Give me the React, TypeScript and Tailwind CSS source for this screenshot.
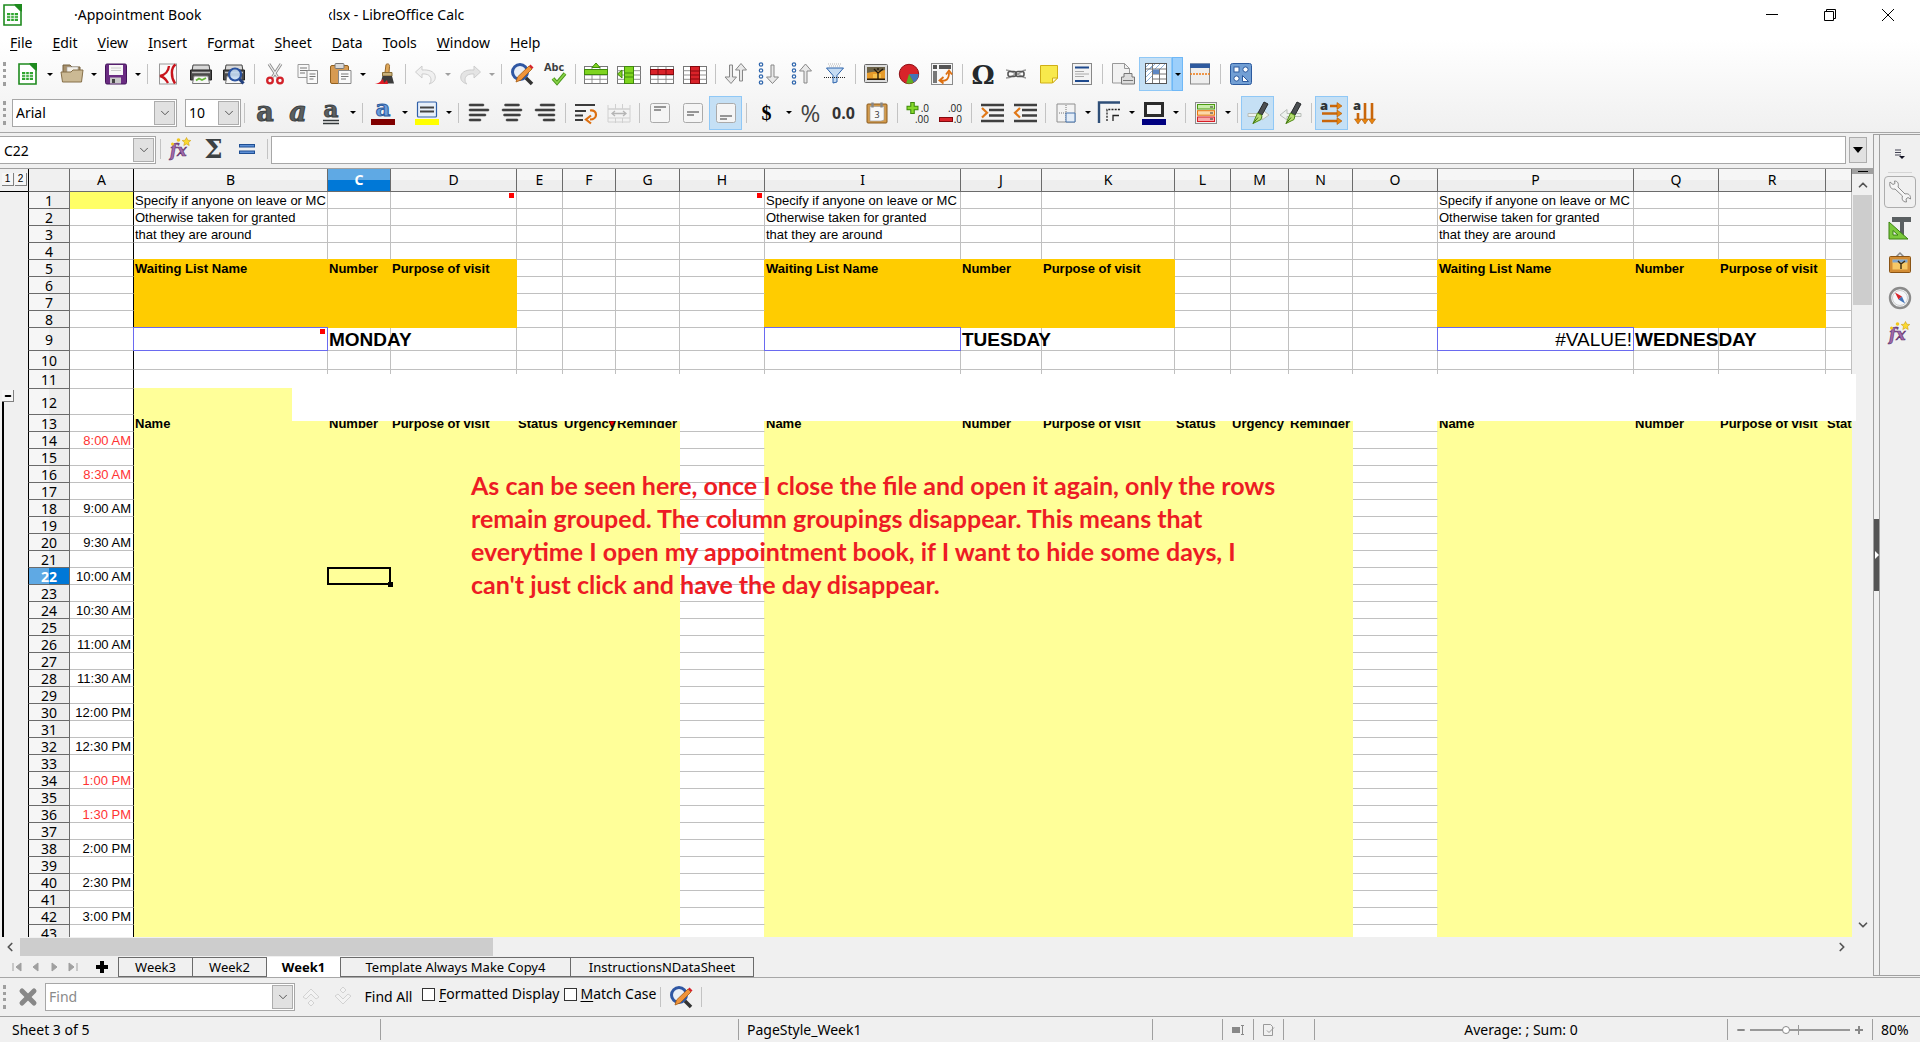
import React from "react";
import clsx from "clsx";
import { ChevronDown, ChevronLeft, ChevronRight, ChevronUp, Minus, X } from "lucide-react";

/* ---------- Icons ---------- */

const Icon: React.FC<{ children: React.ReactNode }> = ({ children }) => (
  <svg viewBox="0 0 24 24" className="w-6 h-6 shrink-0 overflow-visible" fill="none" aria-hidden="true">
    {children}
  </svg>
);

const CalcDoc = () => (
  <Icon>
    <path d="M3 2h11l6 6v14H3z" fill="#fff" stroke="#1e8a1e" strokeWidth="1.6" />
    <path d="M13 1h8v8z" fill="#1e8a1e" />
    <rect x="6" y="10" width="11" height="8" fill="#2fa52f" />
    <path d="M6 12.700h11M6 15.300h11M9.700 10v8M13.300 10v8" stroke="#fff" strokeWidth="0.9" />
  </Icon>
);

const Folder = () => (
  <Icon>
    <path d="M3 3h7l2 2h8v10H3z" fill="#a8916d" stroke="#75603e" />
    <path d="M7 5h11v8H7z" fill="#f4f1ea" stroke="#aaa" strokeWidth="0.6" />
    <path d="M1 10h10l2-2h10l-1.500 12H2.500z" fill="#cbb994" stroke="#86704a" />
  </Icon>
);

const Floppy = () => (
  <Icon>
    <rect x="1.500" y="2" width="21" height="20" rx="1.500" fill="#6a2c82" stroke="#43145a" />
    <rect x="5" y="3" width="14" height="10" fill="#f7f7f7" />
    <path d="M7 6h10M7 8.500h10" stroke="#ccc" />
    <rect x="6" y="15.500" width="11" height="6" fill="#c9c9c9" />
    <rect x="8" y="17" width="3" height="4" fill="#444" />
  </Icon>
);

const Pdf = () => (
  <Icon>
    <rect x="3.500" y="2" width="17" height="20" fill="#fafafa" stroke="#999" />
    <path d="M19.500 2.500c-4.500 3-5 12-.5 19M13 4c-.5 5-4 9-9 10 3 .5 6 3.500 8 7" stroke="#c8141c" strokeWidth="2.400" />
  </Icon>
);

const PrinterBody = () => (
  <>
    <path d="M4 3h16l1 6H3z" fill="#d8d8d8" stroke="#444" />
    <path d="M1.500 8h21v10h-21z" fill="#4a4a4a" stroke="#222" />
    <path d="M3 10.500h18" stroke="#bbb" strokeWidth="1.500" />
    <path d="M5 14h14l1.500 7.500h-17z" fill="#f7f7f7" stroke="#777" />
  </>
);

const PrinterIcon = () => (
  <Icon>
    <PrinterBody />
    <path d="M7 18.500l3-2 3 1.500 4-2" stroke="#67b93a" strokeWidth="1.800" />
  </Icon>
);

const Preview = () => (
  <Icon>
    <PrinterBody />
    <circle cx="13" cy="12.500" r="6" fill="#c4daf2" fillOpacity="0.900" stroke="#2b53a0" strokeWidth="2.200" />
    <path d="M17.500 17l4 4.500" stroke="#223f7d" strokeWidth="3" />
  </Icon>
);

const Scissors = () => (
  <Icon>
    <path d="M6 2l8.500 13M18 2L9.500 15" stroke="#8b8b8b" strokeWidth="3" />
    <path d="M6 2l8.500 13M18 2L9.500 15" stroke="#f0f0f0" strokeWidth="1.300" />
    <circle cx="7" cy="18.500" r="2.800" stroke="#d3222a" strokeWidth="2.300" />
    <circle cx="17" cy="18.500" r="2.800" stroke="#d3222a" strokeWidth="2.300" />
  </Icon>
);

const Copy = () => (
  <Icon>
    <path d="M2 2.500h11v13H2z" fill="#f8f8f8" stroke="#9b9b9b" />
    <path d="M4 6h7M4 8.500h7M4 11h5" stroke="#777" />
    <path d="M11 8.500h10.500v13H11z" fill="#fafafa" stroke="#8b8b8b" />
    <path d="M13.500 12h6M13.500 14.500h6M13.500 17h4" stroke="#777" />
  </Icon>
);

const Paste = () => (
  <Icon>
    <rect x="1.500" y="3.500" width="18" height="18" rx="1.500" fill="#d79b52" stroke="#91601f" />
    <rect x="6" y="1.500" width="9" height="5" rx="1" fill="#d9d9d9" stroke="#777" />
    <path d="M9.500 8.500H22v13H9.500z" fill="#fafafa" stroke="#888" />
    <path d="M12 12h7.500M12 14.500h7.500M12 17h5" stroke="#777" />
  </Icon>
);

const Brush = () => (
  <Icon>
    <path d="M13 2.500c2-1.500 4 0 3.500 2l-.5 6h-4z" fill="#e0a95a" stroke="#96662a" />
    <path d="M9.500 10.500h9.500v3.500H9.500z" fill="#c9b27d" stroke="#866c36" />
    <path d="M9.500 14H19l2 7.500H7.500z" fill="#3c3c3c" />
    <path d="M0 22c5 0 7-2 10-5l1 4 3-3 1 4z" fill="#e01b24" />
  </Icon>
);

const Undo = () => (
  <Icon>
    <path d="M8 4L1.500 10 8 16v-4c6-.5 9 2 9 6 0 2-1 3-2 4 5-1.500 7-4.500 6-8.500C20 9.500 15 7.500 8 8z" fill="#f0f0f0" stroke="#cdcdcd" />
  </Icon>
);

const Redo = () => (
  <Icon>
    <path d="M16 4l6.500 6L16 16v-4c-6-.5-9 2-9 6 0 2 1 3 2 4-5-1.500-7-4.500-6-8.500C4 9.500 9 7.500 16 8z" fill="#e4e4e4" stroke="#cdcdcd" />
  </Icon>
);

const FindReplace = () => (
  <Icon>
    <circle cx="10" cy="10" r="7.500" fill="#e9eff7" stroke="#2f57a3" strokeWidth="3" />
    <path d="M16 16l6 6" stroke="#333" strokeWidth="3.500" />
    <path d="M6 20l1.500-5L19 4l3 3L11 18z" fill="#f0943a" stroke="#a35a12" strokeWidth="0.800" />
    <path d="M19 4l1.500-1.500 3 3L22 7z" fill="#d8232a" />
  </Icon>
);

const Spelling = () => (
  <Icon>
    <text x="1" y="9" fontFamily="Open Sans" fontWeight="700" fontSize="11" fill="#3b3f41">Abc</text>
    <path d="M10 16.500l4 4.500 8-9.500" stroke="#4c9a1c" strokeWidth="3.600" />
    <path d="M10 16.500l4 4.500 8-9.500" stroke="#8ad34a" strokeWidth="1.600" />
  </Icon>
);

const GridLines = () => (
  <>
    <rect x="0.500" y="4.500" width="23" height="17" fill="#fff" stroke="#777" />
    <path d="M0 8.700h24M0 13h24M0 17.300h24M8 5v16M16 5v16" stroke="#888" strokeWidth="0.900" />
  </>
);

const InsertRow = () => (
  <Icon>
    <GridLines />
    <rect x="0.500" y="7.500" width="23" height="5" fill="#7fd420" stroke="#3f8a0b" />
    <path d="M12 1l4 4.500H8z" fill="#7fd420" stroke="#3f8a0b" />
  </Icon>
);

const InsertColumn = () => (
  <Icon>
    <GridLines />
    <rect x="7.500" y="4.500" width="9" height="17" fill="#7fd420" stroke="#3f8a0b" />
    <path d="M8 11h8M8 15h8" stroke="#3f8a0b" />
    <path d="M.5 12L5 8v8z" fill="#7fd420" stroke="#3f8a0b" />
  </Icon>
);

const DeleteRow = () => (
  <Icon>
    <GridLines />
    <rect x="0.500" y="7.500" width="23" height="5" fill="#da2229" stroke="#84090e" />
    <path d="M8 8v4M16 8v4" stroke="#84090e" />
  </Icon>
);

const DeleteColumn = () => (
  <Icon>
    <GridLines />
    <rect x="7.500" y="4.500" width="9" height="17" fill="#da2229" stroke="#84090e" />
    <path d="M8 9h8M8 13h8M8 17h8" stroke="#84090e" />
  </Icon>
);

const Sort = () => (
  <Icon>
    <path d="M5.500 3h3v12h4L7 21.500 1 15h4.500z" fill="#e9e9e9" stroke="#878787" />
    <path d="M15.500 19h3V8h4L17 1.500 11.500 8h4z" fill="#e9e9e9" stroke="#878787" />
  </Icon>
);

const Dots = () => (
  <g stroke="#2f66ad" strokeWidth="1.200">
    {[2.5, 8.5, 14.5, 20.5].map((y) => <circle key={y} cx="4" cy={y} r="1.700" />)}
  </g>
);

const SortAsc = () => (
  <Icon>
    <Dots />
    <path d="M14 3h3v12h4.500L15.500 21.500 9.500 15H14z" fill="#e9e9e9" stroke="#878787" />
  </Icon>
);

const SortDesc = () => (
  <Icon>
    <Dots />
    <path d="M14 21h3V9h4.500L15.500 2 9.500 9H14z" fill="#e9e9e9" stroke="#878787" />
  </Icon>
);

const Filter = () => (
  <Icon>
    <path d="M5 2h14M6 4h12" stroke="#b5b5b5" strokeDasharray="1 1" />
    <path d="M3.500 6h17L14 13.500V20l-4 1v-7.500z" fill="#c6dcf3" stroke="#2b62ab" />
    <path d="M1 15.500h22" stroke="#222" strokeDasharray="1 1" />
  </Icon>
);

const Picture = () => (
  <Icon>
    <rect x="0.500" y="2.500" width="23" height="18" rx="1" fill="#ddd" stroke="#666" />
    <rect x="3" y="5" width="18" height="13" fill="#e59a2a" />
    <path d="M3 5h18v3c-5 2-12 1-18 3z" fill="#6b6248" />
    <path d="M9 12h8v4H9z" fill="#f7c04a" />
    <path d="M3 16.500h18V18H3z" fill="#2b1d08" />
    <path d="M14 17v-6l-4-4M14 11l5-4M14 8V6" stroke="#21170a" strokeWidth="1.300" />
  </Icon>
);

const Chart = () => (
  <Icon>
    <circle cx="12" cy="12" r="9.700" fill="#d8232a" stroke="#8f0e13" />
    <path d="M12 12h9.700c0 4-2 7-5 8.500z" fill="#4474b8" />
    <path d="M12 12l4.700 8.500c-2 1.500-6 1.500-7.500.8z" fill="#5fae22" />
  </Icon>
);

const Pivot = () => (
  <Icon>
    <rect x="1.500" y="1.500" width="21" height="21" fill="#f7f7f7" stroke="#8a8a8a" />
    <rect x="3" y="3" width="4" height="4" fill="#555" />
    <rect x="9" y="3" width="12" height="4" fill="#555" />
    <rect x="3" y="9" width="4" height="12" fill="#777" />
    <path d="M11 18.500c5 1 8-1 8-8M13.500 15l-4 3.500 4 3M16 12.500l3-4 3 4" stroke="#dd6f10" strokeWidth="1.800" />
  </Icon>
);

const Omega = () => (
  <Icon>
    <text x="12" y="21.500" textAnchor="middle" fontFamily="DejaVu Serif" fontWeight="700" fontSize="26" fill="#24292c">Ω</text>
  </Icon>
);

const Link = () => (
  <Icon>
    <path d="M2 8c5 0 7 3 10 4s6-4 10-4M2 16c5 0 7-3 10-4s6 4 10 4" stroke="#999" strokeWidth="1.500" />
    <rect x="4" y="9.500" width="8" height="5" rx="2" stroke="#555" strokeWidth="1.600" />
    <rect x="12" y="9.500" width="8" height="5" rx="2" stroke="#555" strokeWidth="1.600" />
  </Icon>
);

const Note = () => (
  <Icon>
    <path d="M3.500 3.500h17V16l-5 5h-12z" fill="#f8e94c" stroke="#cfae17" />
    <path d="M20.500 16h-5v5z" fill="#fffbc9" stroke="#cfae17" />
  </Icon>
);

const HeaderFooter = () => (
  <Icon>
    <rect x="2.500" y="1.500" width="19" height="21" fill="#f3f3f3" stroke="#888" />
    <path d="M5 5.500h14M5 19h14" stroke="#1f4a8d" strokeWidth="2.200" />
    <path d="M5 9.500h9M5 12h14M5 14.500h9" stroke="#aaa" />
  </Icon>
);

const PrintArea = () => (
  <Icon>
    <path d="M1.500 1.500h12l5 5V21h-17z" fill="#f2f2f2" stroke="#999" />
    <path d="M13.500 1.500v5h5" stroke="#999" />
    <path d="M13 11.500h8V15h2.500v7h-13v-7H13z" fill="#ddd" stroke="#777" />
    <path d="M12 18.500h10" stroke="#777" />
  </Icon>
);

const Freeze = () => (
  <Icon>
    <rect x="1.500" y="1.500" width="21" height="20" fill="#fff" stroke="#555" />
    <path d="M2 5l3-3M2 10l6-6M6 7l5-5M11 7l5-5M16 7l5-5M2 15l6-6M2 20l6-6" stroke="#8db4de" />
    <path d="M8.500 2v19M2 7h20M15.500 7v14M9 12h13M9 17h13" stroke="#777" />
    <rect x="9" y="7.500" width="6" height="4.500" fill="#5d87c4" />
  </Icon>
);

const SplitWindow = () => (
  <Icon>
    <rect x="2.500" y="2" width="19" height="20" fill="#eee" stroke="#888" />
    <rect x="2" y="1.500" width="20" height="4.500" fill="#2e5a9e" />
    <path d="M2 12h20" stroke="#ee7a13" strokeWidth="1.300" strokeDasharray="2 1" />
  </Icon>
);

const Shapes = () => (
  <Icon>
    <rect x="1.500" y="1.500" width="21" height="21" rx="2" fill="#729fd4" stroke="#2c5a9e" />
    <g fill="#fff" stroke="#2c5a9e">
      <rect x="5" y="5" width="5" height="5" />
      <circle cx="16.500" cy="7.500" r="2.600" />
      <circle cx="7.500" cy="16.500" r="2.600" />
      <path d="M13.500 13.500v6h6z" />
    </g>
  </Icon>
);

const BigA: React.FC<{ italic?: boolean; underline?: boolean }> = ({ italic, underline }) => (
  <Icon>
    <text
      x="12"
      y={underline ? 16 : 20}
      textAnchor="middle"
      fontFamily="DejaVu Serif"
      fontWeight="700"
      fontStyle={italic ? "italic" : "normal"}
      fontSize={underline ? 23 : 27}
      fill="#5a5f60"
      stroke="#3c4143"
      strokeWidth="1"
    >
      a
    </text>
    {underline && <path d="M4 19.500h16M4 22.500h16" stroke="#33383a" strokeWidth="1.400" />}
  </Icon>
);

const FontColor = () => (
  <Icon>
    <text x="12" y="15" textAnchor="middle" fontFamily="DejaVu Serif" fontWeight="700" fontSize="23" fill="#6b9bd8" stroke="#2b5a9e" strokeWidth="1">a</text>
    <rect x="0" y="18" width="24" height="6" fill="#800000" />
  </Icon>
);

const Highlight = () => (
  <Icon>
    <rect x="2.500" y="1" width="19" height="15" rx="1" fill="#e8f0fa" stroke="#2f5fa8" strokeWidth="1.200" />
    <path d="M5 6.500h14M5 10.500h14" stroke="#444" strokeWidth="2" />
    <rect x="0" y="18" width="24" height="6" fill="#ffff00" />
  </Icon>
);

const Align: React.FC<{ side: "left" | "center" | "right" }> = ({ side }) => (
  <Icon>
    {[15, 20, 17, 12].map((len, i) => {
      const x = side === "left" ? 2 : side === "right" ? 22 - len : 12 - len / 2;
      return <rect key={i} x={x} y={3 + i * 5} width={len} height="2" rx="1" fill="#4a4a4a" stroke="#222" strokeWidth="0.500" />;
    })}
  </Icon>
);

const Wrap = () => (
  <Icon>
    <path d="M1 4h20M1 10h11M1 14.500h8M1 19h8" stroke="#3b3b3b" strokeWidth="2" />
    <path d="M16 9.500c8-1 8 9 0 9M17 14.500l-5 4 5 4" stroke="#dd6f10" strokeWidth="2.200" />
  </Icon>
);

const Merge = () => (
  <Icon>
    <path d="M1 4v4h22V4M8.500 3v5M15.500 3v5M1 17v4h22v-4M8.500 17v5M15.500 17v5M1 8h22v9H1z" stroke="#d0d0d0" />
    <path d="M5 12.500h14M8 10l-3 2.500L8 15M16 10l3 2.500-3 2.500" stroke="#b5b5b5" strokeWidth="1.300" />
  </Icon>
);

const VAlign: React.FC<{ y: number }> = ({ y }) => (
  <Icon>
    <rect x="2.500" y="2.500" width="19" height="19" rx="2" fill="#f5f5f5" stroke="#aaa" />
    <path d={`M6 ${y}h12M6 ${y + 3}h7`} stroke="#777" strokeWidth="1.300" />
  </Icon>
);

const Glyph: React.FC<{ text: string; className: string }> = ({ text, className }) => (
  <span className={clsx("leading-6 whitespace-nowrap", className)}>{text}</span>
);

const Calendar = () => (
  <Icon>
    <rect x="2" y="3" width="20" height="19" rx="1" fill="#d29a4c" stroke="#8a5a1c" />
    <path d="M5 5.500h14V19l-3 1H5z" fill="#f8f8f8" stroke="#999" strokeWidth="0.600" />
    <path d="M7.500 1.500v5M16.500 1.500v5" stroke="#888" strokeWidth="2.400" />
    <text x="12" y="16.500" textAnchor="middle" fontFamily="Open Sans" fontSize="9" fill="#333">3</text>
  </Icon>
);

const AddDecimal = () => (
  <Icon>
    <path d="M6.500 1v12M.5 7h12" stroke="#3f8a0b" strokeWidth="4.600" />
    <path d="M6.500 2v10M1.500 7h10" stroke="#86d92c" strokeWidth="2.400" />
    <text x="23" y="11" textAnchor="end" fontFamily="Open Sans" fontSize="10" fill="#222">.0</text>
    <text x="23" y="22" textAnchor="end" fontFamily="Open Sans" fontSize="10" fill="#222">.00</text>
  </Icon>
);

const RemoveDecimal = () => (
  <Icon>
    <rect x="0.500" y="16.500" width="13" height="4" fill="#da2229" stroke="#84090e" />
    <text x="23" y="11" textAnchor="end" fontFamily="Open Sans" fontSize="10" fill="#222">.00</text>
    <text x="23" y="22" textAnchor="end" fontFamily="Open Sans" fontSize="10" fill="#222">.0</text>
  </Icon>
);

const Indent: React.FC<{ less?: boolean }> = ({ less }) => (
  <Icon>
    <path d="M1 4h23M9 9h15M9 14.500h15M1 20h23" stroke="#3f3f3f" strokeWidth="2.500" />
    <path d={less ? "M7 7l-5 4.800L7 16.500" : "M2 7l5 4.800L2 16.500"} stroke="#e07818" strokeWidth="2.200" />
  </Icon>
);

const Borders = () => (
  <Icon>
    <path d="M3 3h18v18H3z" fill="#f3f3f3" stroke="#8f8f8f" />
    <path d="M12 4v8H4M12 12v9" stroke="#777" strokeDasharray="1 1" />
    <path d="M12 12h9v9h-9z" fill="#e4edf7" stroke="#4573ac" />
  </Icon>
);

const BorderStyle = () => (
  <Icon>
    <path d="M1 22V1.500h21" stroke="#2f4f78" strokeWidth="2.400" />
    <path d="M9 20V8.500h13" stroke="#222" strokeDasharray="2 1.200" strokeWidth="1.300" />
    <path d="M15 20v-5.500h6" stroke="#222" strokeWidth="1.300" />
  </Icon>
);

const BorderColor = () => (
  <Icon>
    <rect x="3.500" y="2.500" width="17" height="12" fill="#f5f5f5" stroke="#2b2b2b" strokeWidth="3" />
    <rect x="0" y="18" width="24" height="6" fill="#000080" />
  </Icon>
);

const Conditional = () => (
  <Icon>
    <rect x="1.500" y="1.500" width="21" height="21" fill="#f1f1f1" stroke="#8d8d8d" />
    <rect x="3.500" y="3.500" width="17" height="4.500" fill="#c9edaa" stroke="#4a9a10" />
    <rect x="3.500" y="9.700" width="17" height="4.500" fill="#fbd8a8" stroke="#e8750c" />
    <rect x="3.500" y="16" width="17" height="4.500" fill="#f7aaaa" stroke="#d81e26" />
    <path d="M16 6h3M16 12h3M16 18h3" stroke="#333" />
  </Icon>
);

const Pen: React.FC<{ back?: boolean }> = ({ back }) => (
  <Icon>
    <path
      d={back ? "M22 12.500H8v-4L1 14l7 5v-3.500h14z" : "M2 12.500h14v-4l7 5.500-7 5v-3.500H2z"}
      fill="#eef2ee"
      stroke="#b8bdb8"
    />
    <path d="M18 1l4 2-6 11-4-2z" fill="#4b4f52" stroke="#26292b" />
    <path d="M11.500 12l4.500 2.500-1 4-8 4z" fill="#b6dc71" stroke="#4f8a14" />
    <path d="M7 22.500l5-6" stroke="#3c6d0c" />
  </Icon>
);

const Flow: React.FC<{ vertical?: boolean }> = ({ vertical }) => (
  <Icon>
    <text x="0" y="9" fontFamily="Open Sans" fontWeight="800" fontSize="13" fill="#2f3436">a</text>
    <g stroke="#c9660a" strokeWidth="2.600">
      {vertical
        ? <path d="M5 12v7M12 2v17M19 2v17" />
        : <path d="M10 5h8M2 12.500h16M2 20h16" />}
    </g>
    <g fill="#e8860f" stroke="#b05708" strokeWidth="0.600">
      {vertical
        ? <path d="M1.500 18h7L5 23zM8.500 18h7L12 23zM15.500 18h7L19 23z" />
        : <path d="M17 1.500v7L22 5zM17 9v7l5-3.500zM17 16.500v7l5-3.500z" />}
    </g>
  </Icon>
);

const FunctionWizard = () => (
  <Icon>
    <text x="1" y="19" fontFamily="DejaVu Serif" fontStyle="italic" fontWeight="700" fontSize="16" fill="#a06aac" stroke="#5e2f69" strokeWidth="0.600">fx</text>
    <path d="M17.500.5l1.300 2.700 3 .3-2.300 2 .7 3-2.700-1.500-2.700 1.500.7-3-2.300-2 3-.3z" fill="#fbd92f" stroke="#d0a010" strokeWidth="0.600" />
    <circle cx="9.500" cy="3" r="1.800" fill="#f2c81d" />
    <circle cx="3.500" cy="7" r="1.500" fill="#f2c81d" />
  </Icon>
);

const Equals = () => (
  <Icon>
    <rect x="4.500" y="7.500" width="15" height="2.500" fill="#5d8fd6" stroke="#1f4f93" />
    <rect x="4.500" y="14" width="15" height="2.500" fill="#5d8fd6" stroke="#1f4f93" />
  </Icon>
);

const Wrench = () => (
  <Icon>
    <path d="M2 2l3 2.500 2-1L6.500 1C10 1 11 4 10 7l7 7c3-1 6 1 5.500 5l-2.500-1.500-2 1.500.5 3c-4 0-5-3-4-6L7 9C3 10 1 6 2 2z" fill="#f6f6f6" stroke="#8b8b8b" />
  </Icon>
);

const Styles = () => (
  <Icon>
    <path d="M4 1h19v5h-7V20h-4V6H4z" fill="#5a5f61" />
    <path d="M1 6v17h19z" fill="#7bc93c" stroke="#3a8210" />
    <path d="M5 14.500V19h5z" fill="#f0f0f0" stroke="#3a8210" />
  </Icon>
);

const Gallery = () => (
  <Icon>
    <path d="M8 6l4-4 4 4" stroke="#888" strokeWidth="1.500" />
    <rect x="1.500" y="5.500" width="21" height="16" rx="1" fill="#d38d35" stroke="#8a5415" />
    <rect x="4.500" y="8.500" width="15" height="10" fill="#f6c867" />
    <path d="M4.500 8.500h15v3h-15z" fill="#7fa5cf" />
    <path d="M13 18v-5l-3-3M13 13l4-3" stroke="#3b2a10" strokeWidth="1.400" />
  </Icon>
);

const Compass = () => (
  <Icon>
    <circle cx="12" cy="12" r="10" fill="#f5f7fa" stroke="#8b8b8b" strokeWidth="2.400" />
    <circle cx="12" cy="12" r="7.500" stroke="#ccc" />
    <path d="M7 6.500l7 4-3.500 3z" fill="#d8232a" />
    <path d="M17 17.500l-6.500-4L14 10.500z" fill="#4474b8" />
  </Icon>
);

const FindArrow: React.FC<{ down?: boolean }> = ({ down }) => (
  <Icon>
    <path
      d={down ? "M4 11l8 8 8-8-3-2-5 5-5-5zM12 2l3 3-3 3-3-3z" : "M4 12l8-8 8 8-3 2-5-5-5 5zM12 15l3 3-3 3-3-3z"}
      fill="#f3f3f3"
      stroke="#d2d2d2"
    />
  </Icon>
);

/* ---------- Toolbar parts ---------- */

type Tool = {
  label: string;
  icon: React.ReactNode;
  menu?: boolean;
  active?: boolean;
  disabled?: boolean;
};

const Separator = () => (
  <div className="w-2 h-5 shrink-0 flex justify-center">
    <div className="w-px h-full bg-[#c3c3c3]" />
  </div>
);

const Handle = () => (
  <div className="w-[3px] h-6 ml-[3px] shrink-0 border-l-[3px] border-dotted border-[#9f9f9f]" />
);

const Caret: React.FC<{ disabled?: boolean }> = ({ disabled }) => (
  <svg viewBox="0 0 6 3" className="w-1.5 h-[3px]" aria-hidden="true">
    <path d="M0 0h6L3 3z" fill={disabled ? "#a0a0a0" : "#000"} />
  </svg>
);

const ToolItem: React.FC<{ tool: Tool }> = ({ tool }) => (
  <>
    <button
      type="button"
      title={tool.label}
      aria-label={tool.label}
      className={clsx(
        "w-[33px] h-[34px] shrink-0 flex items-center justify-center border",
        tool.active ? "bg-[#c5e0f5] border-[#90c8f6]" : "border-transparent"
      )}
    >
      {tool.icon}
    </button>
    {tool.menu && (
      <button
        type="button"
        aria-label={`${tool.label} options`}
        className={clsx(
          "w-[11px] h-[34px] shrink-0 flex items-center justify-center",
          tool.active && "bg-[#9ccffb] border border-[#6fb8f7]"
        )}
      >
        <Caret disabled={tool.disabled} />
      </button>
    )}
  </>
);

const ToolGroups: React.FC<{ groups: Tool[][] }> = ({ groups }) => (
  <>
    {groups.map((group, i) => (
      <React.Fragment key={i}>
        {i > 0 && <Separator />}
        {group.map((tool) => <ToolItem key={tool.label} tool={tool} />)}
      </React.Fragment>
    ))}
  </>
);

const STANDARD: Tool[][] = [
  [
    { label: "New", icon: <CalcDoc />, menu: true },
    { label: "Open", icon: <Folder />, menu: true },
    { label: "Save", icon: <Floppy />, menu: true },
  ],
  [
    { label: "Export as PDF", icon: <Pdf /> },
    { label: "Print", icon: <PrinterIcon /> },
    { label: "Print Preview", icon: <Preview /> },
  ],
  [
    { label: "Cut", icon: <Scissors /> },
    { label: "Copy", icon: <Copy /> },
    { label: "Paste", icon: <Paste />, menu: true },
    { label: "Clone Formatting", icon: <Brush /> },
  ],
  [
    { label: "Undo", icon: <Undo />, menu: true, disabled: true },
    { label: "Redo", icon: <Redo />, menu: true, disabled: true },
  ],
  [
    { label: "Find and Replace", icon: <FindReplace /> },
    { label: "Spelling", icon: <Spelling /> },
  ],
  [
    { label: "Insert Row", icon: <InsertRow /> },
    { label: "Insert Column", icon: <InsertColumn /> },
    { label: "Delete Row", icon: <DeleteRow /> },
    { label: "Delete Column", icon: <DeleteColumn /> },
  ],
  [
    { label: "Sort", icon: <Sort /> },
    { label: "Sort Ascending", icon: <SortAsc /> },
    { label: "Sort Descending", icon: <SortDesc /> },
    { label: "AutoFilter", icon: <Filter /> },
  ],
  [
    { label: "Insert Image", icon: <Picture /> },
    { label: "Insert Chart", icon: <Chart /> },
    { label: "Pivot Table", icon: <Pivot /> },
  ],
  [
    { label: "Special Character", icon: <Omega /> },
    { label: "Hyperlink", icon: <Link /> },
    { label: "Comment", icon: <Note /> },
    { label: "Headers and Footers", icon: <HeaderFooter /> },
  ],
  [
    { label: "Define Print Area", icon: <PrintArea /> },
    { label: "Freeze Rows and Columns", icon: <Freeze />, menu: true, active: true },
    { label: "Split Window", icon: <SplitWindow /> },
  ],
  [{ label: "Show Draw Functions", icon: <Shapes /> }],
];

const FORMATTING: Tool[][] = [
  [
    { label: "Bold", icon: <BigA /> },
    { label: "Italic", icon: <BigA italic /> },
    { label: "Underline", icon: <BigA underline />, menu: true },
  ],
  [
    { label: "Font Color", icon: <FontColor />, menu: true },
    { label: "Highlighting", icon: <Highlight />, menu: true },
  ],
  [
    { label: "Align Left", icon: <Align side="left" /> },
    { label: "Align Center", icon: <Align side="center" /> },
    { label: "Align Right", icon: <Align side="right" /> },
  ],
  [
    { label: "Wrap Text", icon: <Wrap /> },
    { label: "Merge Cells", icon: <Merge /> },
  ],
  [
    { label: "Align Top", icon: <VAlign y={6} /> },
    { label: "Center Vertically", icon: <VAlign y={11} /> },
    { label: "Align Bottom", icon: <VAlign y={15} />, active: true },
  ],
  [
    { label: "Currency", icon: <Glyph text="$" className="font-['Liberation_Serif'] font-bold text-xl text-black" />, menu: true },
    { label: "Percent", icon: <Glyph text="%" className="font-['Open_Sans'] text-2xl text-[#444]" /> },
    { label: "Number", icon: <Glyph text="0.0" className="font-['Open_Sans'] font-bold text-base text-[#333]" /> },
    { label: "Date", icon: <Calendar /> },
  ],
  [
    { label: "Add Decimal Place", icon: <AddDecimal /> },
    { label: "Delete Decimal Place", icon: <RemoveDecimal /> },
  ],
  [
    { label: "Increase Indent", icon: <Indent /> },
    { label: "Decrease Indent", icon: <Indent less /> },
  ],
  [
    { label: "Borders", icon: <Borders />, menu: true },
    { label: "Border Style", icon: <BorderStyle />, menu: true },
    { label: "Border Color", icon: <BorderColor />, menu: true },
  ],
  [{ label: "Conditional Formatting", icon: <Conditional />, menu: true }],
  [
    { label: "Left-To-Right", icon: <Pen />, active: true },
    { label: "Right-To-Left", icon: <Pen back /> },
  ],
  [
    { label: "Text direction left to right", icon: <Flow />, active: true },
    { label: "Text direction top to bottom", icon: <Flow vertical /> },
  ],
];

const DropButton = () => (
  <span className="absolute right-px top-px bottom-px w-[21px] bg-[#e1e1e1] border border-[#adadad] flex items-center justify-center pointer-events-none">
    <ChevronDown className="w-3.5 h-3.5 text-[#444]" strokeWidth={1.5} />
  </span>
);

const Select: React.FC<{ label: string; value: string; className: string }> = ({ label, value, className }) => (
  <div className={clsx("relative h-7 shrink-0 bg-white border border-[#a7a7a7]", className)}>
    <select aria-label={label} defaultValue={value} className="w-full h-full pl-[3px] appearance-none text-sm">
      <option>{value}</option>
    </select>
    <DropButton />
  </div>
);

/* ---------- Chrome ---------- */

const TitleBar = () => (
  <div className="h-[30px] flex items-center">
    <div className="ml-px w-[22px]"><CalcDoc /></div>
    <div className="w-[302px] pl-[51px] whitespace-nowrap">·Appointment Book</div>
    <div className="relative flex-1 whitespace-nowrap">
      xlsx - LibreOffice Calc
      {/* start of the file name is blanked */}
      <span className="absolute left-0 top-0 w-1 h-full bg-white" />
    </div>
    <div className="flex pr-[3px]">
      <button type="button" aria-label="Minimize" className="w-[58px] h-[30px] flex items-center justify-center">
        <svg viewBox="0 0 12 12" className="w-3 h-3"><path d="M0 5.500h12" stroke="#000" /></svg>
      </button>
      <button type="button" aria-label="Restore" className="w-[58px] h-[30px] flex items-center justify-center">
        <svg viewBox="0 0 12 12" className="w-3 h-3" fill="none" stroke="#000"><path d="M.5 2.500h9v9h-9zM2.500 2.500v-2h9v9h-2" /></svg>
      </button>
      <button type="button" aria-label="Close" className="w-[58px] h-[30px] flex items-center justify-center">
        <svg viewBox="0 0 12 12" className="w-3 h-3"><path d="M0 0l12 12M12 0L0 12" stroke="#000" /></svg>
      </button>
    </div>
  </div>
);

const MENUS = [
  ["", "F", "ile"],
  ["", "E", "dit"],
  ["", "V", "iew"],
  ["", "I", "nsert"],
  ["F", "o", "rmat"],
  ["", "S", "heet"],
  ["", "D", "ata"],
  ["", "T", "ools"],
  ["", "W", "indow"],
  ["", "H", "elp"],
];

const MenuBar = () => (
  <nav className="h-[25px] flex items-center gap-5 pl-2.5">
    {MENUS.map(([before, key, after]) => (
      <button key={key + after} type="button" className="whitespace-nowrap">
        {before}
        <span className="underline underline-offset-2">{key}</span>
        {after}
      </button>
    ))}
  </nav>
);

const FormulaBar = () => (
  <div className="h-9 shrink-0 flex items-center pb-1 border-b border-[#a0a0a0]">
    <div className="relative w-[156px] h-7 mt-[3px] shrink-0 bg-white border border-l-0 border-[#a7a7a7]">
      <input aria-label="Name Box" defaultValue="C22" className="w-full h-full pl-1 text-sm" />
      <DropButton />
    </div>
    <Separator />
    <ToolItem tool={{ label: "Function Wizard", icon: <FunctionWizard /> }} />
    <ToolItem
      tool={{
        label: "Select Function",
        icon: <Glyph text="Σ" className="font-['DejaVu_Serif'] font-bold text-[26px] text-[#3c4143]" />,
      }}
    />
    <ToolItem tool={{ label: "Formula", icon: <Equals /> }} />
    <Separator />
    <input aria-label="Input line" className="flex-1 min-w-0 h-7 mt-[3px] bg-white border border-[#a7a7a7] px-1" />
    <button
      type="button"
      aria-label="Expand Formula Bar"
      className="w-[18px] h-[26px] mt-[3px] ml-[3px] mr-1.5 bg-[#e1e1e1] border border-[#adadad] flex items-center justify-center"
    >
      <svg viewBox="0 0 10 6" className="w-2.5 h-1.5"><path d="M0 0h10L5 6z" /></svg>
    </button>
  </div>
);

/* ---------- Sheet data ---------- */

const COLUMNS = [
  { id: "A", width: "w-[64px]" },
  { id: "B", width: "w-[194px]" },
  { id: "C", width: "w-[63px]" },
  { id: "D", width: "w-[126px]" },
  { id: "E", width: "w-[46px]" },
  { id: "F", width: "w-[53px]" },
  { id: "G", width: "w-[64px]" },
  { id: "H", width: "w-[85px]" },
  { id: "I", width: "w-[196px]" },
  { id: "J", width: "w-[81px]" },
  { id: "K", width: "w-[133px]" },
  { id: "L", width: "w-[56px]" },
  { id: "M", width: "w-[58px]" },
  { id: "N", width: "w-[64px]" },
  { id: "O", width: "w-[85px]" },
  { id: "P", width: "w-[196px]" },
  { id: "Q", width: "w-[85px]" },
  { id: "R", width: "w-[107px]" },
  { id: "S", width: "" },
];

const DAYS = [
  { name: "MONDAY", cols: ["B", "C", "D", "E", "F", "G"] },
  { name: "TUESDAY", cols: ["I", "J", "K", "L", "M", "N"] },
  { name: "WEDNESDAY", cols: ["P", "Q", "R", "S"] },
];

const TITLES = ["Name", "Number", "Purpose of visit", "Status", "Urgency", "Reminder"];

const CELLS: Record<string, string> = { P9: "#VALUE!" };

DAYS.forEach(({ name, cols }) => {
  CELLS[cols[0] + 1] = "Specify if anyone on leave or MC";
  CELLS[cols[0] + 2] = "Otherwise taken for granted";
  CELLS[cols[0] + 3] = "that they are around";
  CELLS[cols[0] + 5] = "Waiting List Name";
  CELLS[cols[1] + 5] = "Number";
  CELLS[cols[2] + 5] = "Purpose of visit";
  CELLS[cols[1] + 9] = name;
  cols.forEach((col, i) => {
    CELLS[col + 13] = TITLES[i];
  });
});

// half-hour slots from 8:00 AM, one every second row
for (let i = 0; i < 15; i++) {
  const hour = 8 + Math.floor(i / 2);
  CELLS["A" + (14 + i * 2)] = `${((hour - 1) % 12) + 1}:${i % 2 ? "30" : "00"} ${hour < 12 ? "AM" : "PM"}`;
}

const RED_SLOTS = ["A14", "A16", "A34", "A36"];
const COMMENTS = ["D1", "H1", "B9"];
const FORMULA_BOXES = ["B9", "I9", "P9"];
const ROWS = Array.from({ length: 43 }, (_, i) => i + 1);

const rowHeight = (row: number) => {
  if (row === 9) return "h-[23px]";
  if (row === 10 || row === 11) return "h-[19px]";
  if (row === 12) return "h-[26px]";
  return "h-[17px]";
};

type Fill = "orange" | "yellow" | "lemon" | "none";

const BG: Record<Fill, string> = {
  orange: "bg-[#ffcc00]",
  yellow: "bg-[#ffff99]",
  lemon: "bg-[#ffff66]",
  none: "bg-white",
};
const RIGHT: Record<Fill, string> = {
  orange: "border-r-[#ffcc00]",
  yellow: "border-r-[#ffff99]",
  lemon: "border-r-[#ffff66]",
  none: "border-r-[#c0c0c0]",
};
const BOTTOM: Record<Fill, string> = {
  orange: "border-b-[#ffcc00]",
  yellow: "border-b-[#ffff99]",
  lemon: "border-b-[#ffff66]",
  none: "border-b-[#c0c0c0]",
};

const fillOf = (col: string | undefined, row: number): Fill => {
  if (!col) return "none";
  if (col === "A") return row === 1 ? "lemon" : "none";
  const day = DAYS.find((d) => d.cols.includes(col));
  if (!day) return "none";
  if (row >= 12) return "yellow";
  if (row >= 5 && row <= 8 && day.cols.indexOf(col) < 3) return "orange";
  return "none";
};

const firstFill = (a: Fill, b: Fill) => (a !== "none" ? a : b);

const Cell: React.FC<{ index: number; row: number }> = ({ index, row }) => {
  const col = COLUMNS[index].id;
  const ref = col + row;
  const fill = fillOf(col, row);
  const marked = COMMENTS.includes(ref) || FORMULA_BOXES.includes(ref) || ref === "F13" || ref === "C22";
  return (
    <td
      className={clsx(
        "p-0 border-r border-b whitespace-nowrap align-middle",
        marked && "relative",
        BG[fill],
        col === "A" ? "border-r-black text-right pr-[2px]" : RIGHT[firstFill(fill, fillOf(COLUMNS[index + 1]?.id, row))],
        BOTTOM[firstFill(fill, fillOf(col, row + 1))],
        col !== "A" && (ref === "P9" ? "text-right pr-px" : "pl-px"),
        row === 9 ? "text-[19px] leading-[21px] pt-px" : "text-[13px] leading-[15px] pt-px",
        (row === 5 || row === 13 || (row === 9 && ref !== "P9")) && "font-bold",
        RED_SLOTS.includes(ref) && "text-[#ff3333]"
      )}
    >
      {CELLS[ref]}
      {FORMULA_BOXES.includes(ref) && <span className="absolute -inset-px border border-[#6a6af0]" />}
      {COMMENTS.includes(ref) && <span className="absolute right-[2px] top-px w-[5px] h-[5px] bg-[#ff0000]" />}
      {ref === "F13" && (
        <svg viewBox="0 0 6 6" className="absolute right-0 bottom-1 w-1.5 h-1.5">
          <path d="M0 0h6L3 6z" fill="#ff0000" stroke="#000" strokeWidth="0.700" />
        </svg>
      )}
      {ref === "C22" && (
        <span className="absolute -inset-px border-2 border-black">
          <span className="absolute -right-1 -bottom-1 w-[5px] h-[5px] bg-black" />
        </span>
      )}
    </td>
  );
};

const SheetTable = () => (
  <table className="w-full table-fixed border-separate border-spacing-0 font-['Liberation_Sans']">
    <colgroup>
      <col className="w-[42px]" />
      {COLUMNS.map((c) => <col key={c.id} className={c.width} />)}
    </colgroup>
    <thead>
      <tr className="h-[23px] font-['Noto_Sans'] text-sm">
        <th className="p-0 bg-[#f0f0f0] border-l border-l-black border-r border-b border-[#6b6b6b]" />
        {COLUMNS.map((c) => (
          <th
            key={c.id}
            className={clsx(
              "p-0 h-[23px] leading-5 border-r border-b border-b-[#6b6b6b]",
              c.id === "A" ? "border-r-black" : "border-r-[#6b6b6b]",
              c.id === "C"
                ? "font-bold text-white bg-linear-to-b from-[#5fa9e4] from-50% to-[#0078d7] to-50%"
                : "font-normal bg-linear-to-b from-[#f6f6f6] from-50% to-[#eeeeee] to-50%"
            )}
          >
            {c.id === "S" ? "" : c.id}
          </th>
        ))}
      </tr>
    </thead>
    <tbody>
      {ROWS.map((row) => (
        <tr key={row} className={rowHeight(row)}>
          <th
            className={clsx(
              "p-0 pt-px border-l border-l-black border-r border-b border-[#6b6b6b] font-['Noto_Sans'] text-sm leading-[15px]",
              row === 22
                ? "font-bold text-white bg-linear-to-r from-[#5fa9e4] from-50% to-[#0078d7] to-50%"
                : "font-normal bg-linear-to-r from-[#f6f6f6] from-50% to-[#eeeeee] to-50%"
            )}
          >
            {row}
          </th>
          {COLUMNS.map((c, i) => <Cell key={c.id} index={i} row={row} />)}
        </tr>
      ))}
    </tbody>
  </table>
);

const OutlineGutter = () => (
  <div className="w-7 shrink-0 flex flex-col bg-[#f0f0f0]">
    <div className="h-[23px] shrink-0 flex items-start gap-px pt-1 pl-[2px] border-b border-black">
      {[1, 2].map((n) => (
        <button
          key={n}
          type="button"
          className="w-3 h-[13px] text-[10px] leading-3 font-['Liberation_Sans'] border-r border-b border-[#808080] bg-[#f6f6f6]"
        >
          {n}
        </button>
      ))}
    </div>
    <div className="flex-1 flex flex-col pl-[2px] pt-[198px]">
      <button
        type="button"
        aria-label="Hide details"
        className="w-3 h-3 shrink-0 flex items-center justify-center border-r border-b border-[#808080] bg-[#f6f6f6]"
      >
        <Minus className="w-2 h-2" strokeWidth={6} />
      </button>
      <div className="w-0.5 flex-1 bg-black" />
    </div>
  </div>
);

const Sheet = () => (
  <div className="flex-1 min-w-0 flex overflow-hidden">
    <OutlineGutter />
    <div className="flex-1 min-w-0">
      <SheetTable />
    </div>
  </div>
);

const Annotations = () => (
  <>
    {/* blanked strip over rows 11 to 13 */}
    <div className="absolute left-[134px] right-[17px] top-[205px] h-[14px] bg-white" />
    <div className="absolute left-[292px] right-[17px] top-[219px] h-[33px] bg-white" />
    <p className="absolute left-[471px] top-[300px] font-['Lato'] font-bold text-[25px] leading-[33px] text-[#ed1c24] whitespace-nowrap">
      As can be seen here, once I close the file and open it again, only the rows
      <br />
      remain grouped. The column groupings disappear. This means that
      <br />
      everytime I open my appointment book, if I want to hide some days, I
      <br />
      can't just click and have the day disappear.
    </p>
  </>
);

const VerticalScroll = () => (
  <div className="w-[21px] shrink-0 flex flex-col items-center bg-[#f0f0f0]">
    <div className="w-full h-[5px] bg-[#a0a0a0] flex items-center justify-center">
      <div className="w-2.5 h-px bg-black" />
    </div>
    <button type="button" aria-label="Scroll up" className="h-[21px]">
      <ChevronUp className="w-3.5 h-3.5 text-[#555]" strokeWidth={3} />
    </button>
    <div className="w-[19px] h-[110px] bg-[#cdcdcd]" />
    <div className="flex-1" />
    <button type="button" aria-label="Scroll down" className="h-6">
      <ChevronDown className="w-3.5 h-3.5 text-[#555]" strokeWidth={3} />
    </button>
  </div>
);

const HorizontalScroll = () => (
  <div className="h-5 shrink-0 flex items-center pr-[21px]">
    <button type="button" aria-label="Scroll left" className="w-5 flex justify-center">
      <ChevronLeft className="w-3.5 h-3.5 text-[#555]" strokeWidth={3} />
    </button>
    <div className="w-[473px] h-[18px] bg-[#cdcdcd]" />
    <div className="flex-1" />
    <button type="button" aria-label="Scroll right" className="w-5 flex justify-center">
      <ChevronRight className="w-3.5 h-3.5 text-[#555]" strokeWidth={3} />
    </button>
  </div>
);

const TABS = [
  { name: "Week3", width: "w-[75px]" },
  { name: "Week2", width: "w-[74px]" },
  { name: "Week1", width: "w-[74px]" },
  { name: "Template Always Make Copy4", width: "w-[230px]" },
  { name: "InstructionsNDataSheet", width: "w-[183px]" },
];

const NAV = [
  { label: "First sheet", d: "M2 1v8M10 1L5 5l5 4z" },
  { label: "Previous sheet", d: "M8 1L3 5l5 4z" },
  { label: "Next sheet", d: "M3 1l5 4-5 4z" },
  { label: "Last sheet", d: "M9 1v8M1 1l5 4-5 4z" },
];

const SheetTabs = () => (
  <div className="h-5 shrink-0 flex items-center text-[13px]">
    <div className="flex w-[85px] pl-[7px]">
      {NAV.map((n) => (
        <button key={n.label} type="button" aria-label={n.label} className="w-[19px] flex justify-center">
          <svg viewBox="0 0 11 10" className="w-[11px] h-2.5" fill="#a0a0a0" stroke="#a0a0a0">
            <path d={n.d} />
          </svg>
        </button>
      ))}
    </div>
    <button type="button" aria-label="Add sheet" className="w-[33px] flex justify-center">
      <svg viewBox="0 0 12 12" className="w-3 h-3"><path d="M6 0v12M0 6h12" stroke="#000" strokeWidth="4" /></svg>
    </button>
    {TABS.map((tab) => (
      <button
        key={tab.name}
        type="button"
        className={clsx(
          "h-5 leading-[18px] whitespace-nowrap border-r border-[#6b6b6b]",
          tab.width,
          tab.name === "Week1" ? "bg-white font-bold" : "border-y",
          tab.name === "Week3" && "border-l"
        )}
      >
        {tab.name}
      </button>
    ))}
  </div>
);

const SIDEBAR = [
  { label: "Styles", icon: <Styles /> },
  { label: "Gallery", icon: <Gallery /> },
  { label: "Navigator", icon: <Compass /> },
  { label: "Functions", icon: <FunctionWizard /> },
];

const Sidebar = () => (
  <div className="shrink-0 flex mt-px mb-px border-y border-[#a0a0a0]">
    <div className="w-[7px] border-x border-[#a0a0a0] flex items-center">
      <button type="button" aria-label="Hide sidebar" className="w-[5px] h-[72px] bg-[#555] flex items-center justify-center">
        <svg viewBox="0 0 4 8" className="w-1 h-2"><path d="M0 0l4 4-4 4z" fill="#fff" /></svg>
      </button>
    </div>
    <div className="w-10 flex flex-col items-center">
      <button type="button" aria-label="Sidebar settings" className="h-[37px] w-8 flex items-center justify-center">
        <svg viewBox="0 0 10 10" className="w-2.5 h-2.5">
          <path d="M0 1h6M0 3.500h6M0 6h6" stroke="#445" />
          <path d="M4 7h6l-3 3z" fill="#112" />
        </svg>
      </button>
      <div className="w-6 h-px bg-[#d5d5d5]" />
      <button
        type="button"
        aria-label="Properties"
        title="Properties"
        className="mt-[3px] w-8 h-8 rounded-sm border border-[#adadad] flex items-center justify-center"
      >
        <Wrench />
      </button>
      <div className="flex flex-col pt-[2px]">
        {SIDEBAR.map((s) => (
          <button key={s.label} type="button" aria-label={s.label} title={s.label} className="w-8 h-[35px] flex items-center justify-center">
            {s.icon}
          </button>
        ))}
      </div>
    </div>
  </div>
);

const Check: React.FC<{ id: string; mnemonic: string; rest: string }> = ({ id, mnemonic, rest }) => (
  <div className="flex items-center gap-1 pb-[5px]">
    <input id={id} type="checkbox" className="w-[13px] h-[13px] appearance-none bg-white border border-[#333]" />
    <label htmlFor={id} className="whitespace-nowrap">
      <span className="underline underline-offset-2">{mnemonic}</span>
      {rest}
    </label>
  </div>
);

const FindBar = () => (
  <div className="h-[39px] shrink-0 flex items-center border-t border-[#a7a7a7] pb-px text-sm">
    <Handle />
    <button type="button" aria-label="Close Find Bar" className="w-[39px] pl-1 flex justify-center">
      <X className="w-6 h-6 text-[#888]" strokeWidth={5} />
    </button>
    <div className="relative w-[250px] h-7 shrink-0 bg-white border border-[#a7a7a7]">
      <input aria-label="Find" placeholder="Find" className="w-full h-full pl-[3px] placeholder:text-[#8a8a8a]" />
      <DropButton />
    </div>
    <button type="button" aria-label="Find Previous" className="w-8 flex justify-center"><FindArrow /></button>
    <button type="button" aria-label="Find Next" className="w-8 flex justify-center"><FindArrow down /></button>
    <button type="button" className="w-[59px] mr-1 whitespace-nowrap">Find All</button>
    <Check id="formatted" mnemonic="F" rest="ormatted Display" />
    <div className="w-1" />
    <Check id="match-case" mnemonic="M" rest="atch Case" />
    <Separator />
    <ToolItem tool={{ label: "Find and Replace", icon: <FindReplace /> }} />
    <Separator />
  </div>
);

const StatusBar = () => (
  <div className="h-[26px] shrink-0 flex items-stretch py-[2px] border-t border-[#a0a0a0] text-sm leading-[22px] whitespace-nowrap">
    <div className="w-[381px] pl-3 border-r border-[#a0a0a0]">Sheet 3 of 5</div>
    <div className="w-[358px] border-r border-[#a0a0a0]" />
    <div className="w-[414px] pl-2 border-r border-[#a0a0a0]">PageStyle_Week1</div>
    <div className="w-[70px] border-r border-[#a0a0a0]" />
    <div className="w-[31px] border-r border-[#a0a0a0] flex items-center justify-center">
      <svg viewBox="0 0 12 10" className="w-3 h-2.5" fill="none">
        <rect x="0" y="2" width="8" height="6" fill="#888" />
        <path d="M9 .5h3M10.500.5v9M9 9.500h3" stroke="#888" />
      </svg>
    </div>
    <div className="w-[30px] border-r border-[#a0a0a0] flex items-center justify-center">
      <svg viewBox="0 0 12 12" className="w-3 h-3" fill="none">
        <path d="M.5.5h7l2 2v9h-9z" stroke="#999" />
        <path d="M4 6.500l2 2 5-5" stroke="#999" />
      </svg>
    </div>
    <div className="w-[31px] border-r border-[#a0a0a0]" />
    <div className="flex-1 text-center border-r border-[#a0a0a0]">Average: ; Sum: 0</div>
    <div className="w-[145px] border-r border-[#a0a0a0] flex items-center justify-between px-2">
      <button type="button" aria-label="Zoom out"><Minus className="w-2.5 h-2.5 text-[#888]" strokeWidth={5} /></button>
      <div className="relative w-[100px] h-4 flex items-center">
        <div className="absolute left-12 top-[3px] w-px h-2.5 bg-[#999]" />
        <input
          type="range"
          aria-label="Zoom"
          min={0}
          max={100}
          defaultValue={35}
          className="relative w-full h-4 appearance-none bg-transparent [&::-webkit-slider-runnable-track]:h-0.5 [&::-webkit-slider-runnable-track]:bg-[#999] [&::-webkit-slider-thumb]:appearance-none [&::-webkit-slider-thumb]:w-2 [&::-webkit-slider-thumb]:h-2 [&::-webkit-slider-thumb]:-mt-[3px] [&::-webkit-slider-thumb]:rounded-full [&::-webkit-slider-thumb]:bg-white [&::-webkit-slider-thumb]:border [&::-webkit-slider-thumb]:border-[#888]"
        />
      </div>
      <button type="button" aria-label="Zoom in">
        <svg viewBox="0 0 10 10" className="w-2.5 h-2.5"><path d="M5 1v8M1 5h8" stroke="#888" strokeWidth="2" /></svg>
      </button>
    </div>
    <div className="w-[47px] pl-2">80%</div>
  </div>
);

export default function App() {
  return (
    <div className="h-screen flex flex-col overflow-hidden bg-[#f0f0f0] text-black text-sm font-['Noto_Sans',sans-serif]">
      <header className="shrink-0 bg-linear-to-b from-white from-30% to-[#f0f0f0] border-b border-[#a7a7a7]">
        <TitleBar />
        <MenuBar />
        <div className="h-[38px] flex items-center">
          <Handle />
          <div className="w-[5px] shrink-0" />
          <ToolGroups groups={STANDARD} />
        </div>
        <div className="h-[39px] flex items-center">
          <Handle />
          <div className="w-1.5 shrink-0" />
          <Select label="Font Name" value="Arial" className="w-[165px] mr-2" />
          <Select label="Font Size" value="10" className="w-[56px]" />
          <div className="-ml-px"><Separator /></div>
          <ToolGroups groups={FORMATTING} />
        </div>
      </header>

      <main className="flex-1 min-h-0 flex">
        <div className="flex-1 min-w-0 flex flex-col">
          <FormulaBar />
          <div className="relative flex-1 min-h-0 flex">
            <Sheet />
            <VerticalScroll />
            <Annotations />
          </div>
          <HorizontalScroll />
          <SheetTabs />
        </div>
        <Sidebar />
      </main>

      <FindBar />
      <StatusBar />
    </div>
  );
}
